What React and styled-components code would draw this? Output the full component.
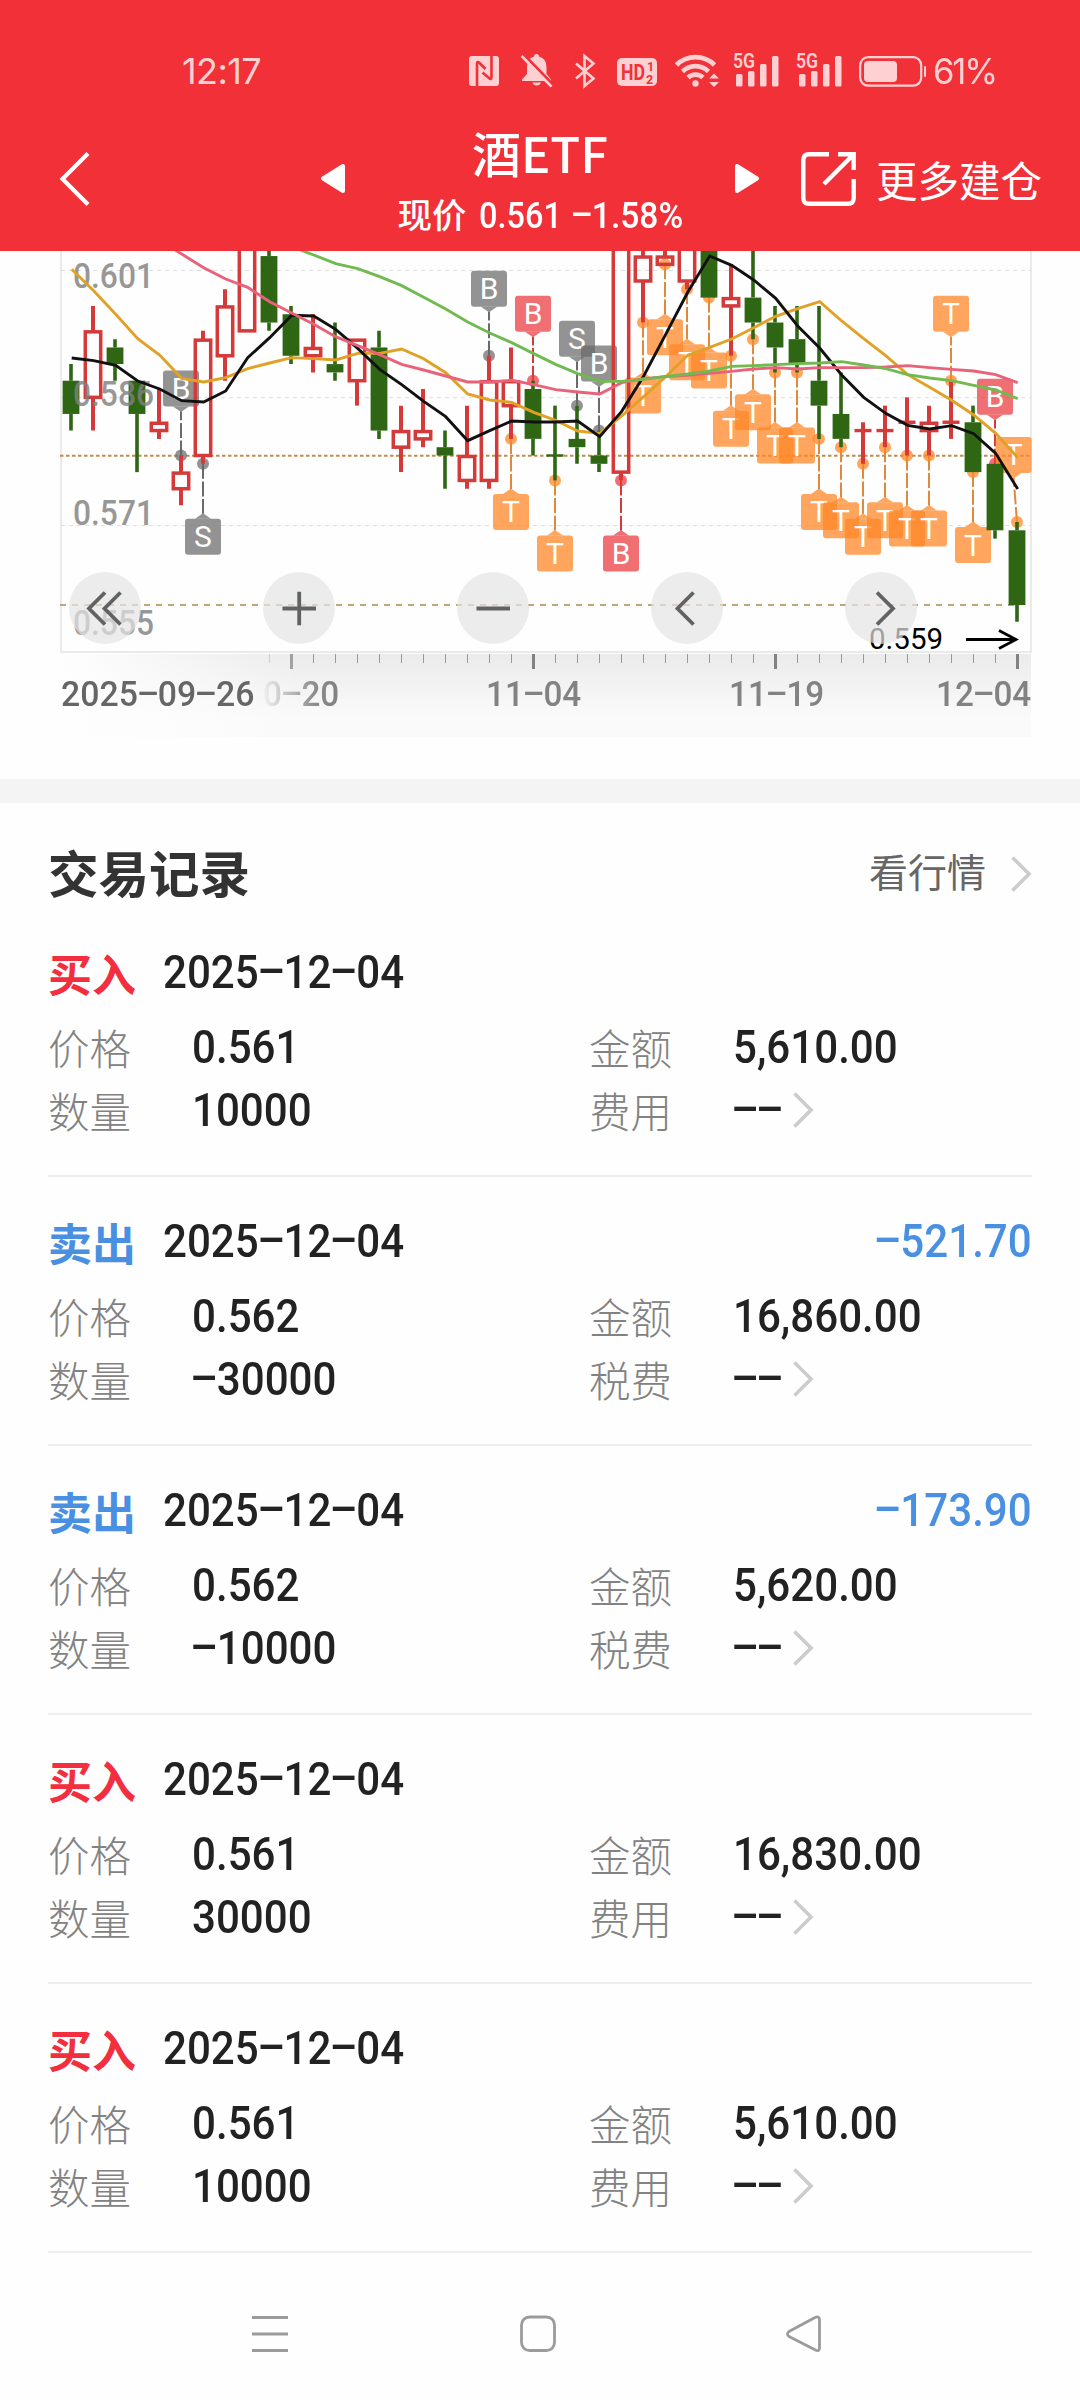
import React from 'react';
import styled, { createGlobalStyle } from 'styled-components';

const GlobalStyle = createGlobalStyle`
  * {
    box-sizing: border-box;
  }
  body {
    margin: 0;
    background: #fefefe;
    font-family: Roboto, 'Noto Sans CJK SC', sans-serif;
    color: #222;
  }
`;

const Page = styled.div`
  width: 1080px;
  height: 2400px;
  display: flex;
  flex-direction: column;
  overflow: hidden;
`;

/* ---------- numbers ---------- */

const DigitsText = styled.span`
  display: inline-block;
  font-family: Roboto, sans-serif;
  font-size: ${p => p.$size || 46}px;
  font-weight: ${p => p.$weight || 500};
  line-height: 1;
  white-space: nowrap;
  transform: scaleX(${p => p.$scale || 0.915});
  transform-origin: ${p => p.$origin || 'left'} center;
`;

// wide minus, as tall as the middle of a digit
const Dash = styled.span`
  display: inline-block;
  width: 0.59em;
  text-align: center;
  transform: translateY(-0.06em) scaleX(2);
`;

const Digits = ({ children, size, weight, scale, origin }) => (
  <DigitsText $size={size} $weight={weight} $scale={scale} $origin={origin}>
    {children.split('').map((c, i) => (c === '-' ? <Dash key={i}>-</Dash> : c))}
  </DigitsText>
);

/* ---------- header ---------- */

const Header = styled.header`
  flex: 0 0 251px;
  background: #f13037;
  color: white;
`;

const StatusBar = styled.div`
  height: 142px;
  padding-left: 182px;
  display: flex;
  align-items: center;
  color: #ffd0d2;
`;

const Clock = styled.span`
  flex: 0 0 287px;
  font-family: Inter, sans-serif;
  font-size: 36px;
  letter-spacing: -0.6px;
`;

const Percent = styled.span`
  margin-left: 6px;
  font-family: Inter, sans-serif;
  font-size: 36px;
  letter-spacing: -2.2px;
  transform: scaleX(0.96);
  transform-origin: left center;
`;

const StatusIcon = styled.svg`
  flex: none;
  height: 36px;
  margin-left: ${p => p.$gap || 0}px;
  overflow: visible;
`;

const TitleBar = styled.div`
  height: 109px;
  display: flex;
  align-items: flex-start;
`;

const BarIcon = styled.svg`
  flex: none;
  margin: ${p => p.$margin};
`;

const TitleBlock = styled.div`
  flex: 0 0 390px;
  margin-top: -21px;
  display: flex;
  flex-direction: column;
  align-items: center;
`;

const Title = styled.h1`
  margin: 0 0 0 -2px;
  font-family: 'Noto Sans CJK SC', sans-serif;
  font-size: 49px;
  font-weight: 500;
  line-height: 62px;
`;

const Subtitle = styled.div`
  display: flex;
  align-items: center;
  height: 52px;
  margin-top: 7px;
  font-size: 34.5px;
  font-weight: 500;
  line-height: 52px;
  margin-right: -8px;
`;

const Quote = styled.span`
  margin-left: 12px;
  display: flex;
`;

const More = styled.span`
  margin-top: 11px;
  margin-left: 20px;
  font-size: 41.5px;
  line-height: 60px;
  white-space: nowrap;
`;

const SignalIcon = ({ gap }) => (
  <StatusIcon $gap={gap} width="46" viewBox="0 0 46 36" fill="currentColor">
    <text x="0" y="15" fontSize="19.5" fontWeight="600" textLength="22" lengthAdjust="spacingAndGlyphs">5G</text>
    <rect x="3" y="21" width="6.5" height="12.5" rx="1.5" />
    <rect x="15" y="18" width="6.5" height="15.5" rx="1.5" />
    <rect x="27" y="11" width="6.5" height="22.5" rx="1.5" />
    <rect x="39" y="3" width="6.5" height="30.5" rx="1.5" />
  </StatusIcon>
);

const StatusIcons = () => (
  <>
    <StatusIcon width="30" viewBox="0 0 30 36">
      <rect y="3" width="30" height="30" rx="3" fill="currentColor" />
      <path d="M8 33.500V11Q8 7.500 10.500 10L16.500 16M22.500 2.500V24Q22.500 27.500 20 25L13.500 19.500" fill="none" stroke="#f13037" strokeWidth="2.600" />
    </StatusIcon>
    <StatusIcon $gap={22} width="32" viewBox="0 0 32 36">
      <path d="M13 3.500Q13 1 15.500 1T18 3.500Q25.500 5.500 25.500 14V21L30 26.500V28H1V26.500L6 21V14Q6 5.500 13 3.500ZM11.500 29.500H20Q19 32.500 15.700 32.500T11.500 29.500Z" fill="currentColor" />
      <path d="M2.500 1.200L32 31.700" stroke="#f13037" strokeWidth="3" />
      <path d="M0.700 3L30.500 33.700" stroke="currentColor" strokeWidth="2.600" />
    </StatusIcon>
    <StatusIcon $gap={22} width="22" viewBox="0 0 22 36">
      <path d="M1 10.500L18.500 25.500L9.500 33V3L18.500 10.500L1 25.500" fill="none" stroke="currentColor" strokeWidth="2.600" />
    </StatusIcon>
    <StatusIcon $gap={20} width="40" viewBox="0 0 40 36">
      <rect y="5" width="40" height="28" rx="5" fill="currentColor" />
      <g fill="#f13037" fontWeight="700">
        <text x="4" y="27" fontSize="22.500" textLength="24" lengthAdjust="spacingAndGlyphs">HD</text>
        <text x="30" y="18" fontSize="12.500">1</text>
        <text x="29" y="31" fontSize="12.500">2</text>
      </g>
    </StatusIcon>
    <StatusIcon $gap={18} width="45" viewBox="0 0 45 36">
      <g fill="none" stroke="currentColor" strokeWidth="4.800">
        <path d="M1.500 12A27 27 0 0 1 39.500 12" />
        <path d="M7.500 18.500A18.500 18.500 0 0 1 33.500 18.500" />
        <path d="M13 24.500A11 11 0 0 1 28 24.500" />
      </g>
      <circle cx="20.500" cy="30.500" r="3.200" fill="currentColor" />
      <path d="M34 25.500L39 20.500L44 25.500ZM34 29L39 34L44 29Z" fill="currentColor" />
    </StatusIcon>
    <SignalIcon gap={13} />
    <SignalIcon gap={17} />
    <StatusIcon $gap={17} width="68" viewBox="0 0 68 36">
      <rect x="1.200" y="4.200" width="61" height="28.500" rx="8" fill="none" stroke="currentColor" strokeWidth="2.200" />
      <rect x="5" y="8" width="33" height="21" rx="4" fill="currentColor" />
      <rect x="65" y="13" width="2" height="11" rx="1" fill="currentColor" />
    </StatusIcon>
  </>
);

const AppHeader = () => (
  <Header>
    <StatusBar>
      <Clock>12:17</Clock>
      <StatusIcons />
      <Percent>61%</Percent>
    </StatusBar>
    <TitleBar>
      <BarIcon $margin="10px 0 0 59px" width="32" height="54" viewBox="0 0 32 54">
        <path d="M29 1.500L3.500 27L29 52.500" fill="none" stroke="white" strokeWidth="4.200" />
      </BarIcon>
      <BarIcon $margin="21px 0 0 229px" width="26" height="31" viewBox="0 0 26 31">
        <path d="M3 15.500L23 3V28Z" fill="white" stroke="white" strokeWidth="4" strokeLinejoin="round" />
      </BarIcon>
      <TitleBlock>
        <Title>酒ETF</Title>
        <Subtitle>
          现价
          <Quote>
            <Digits size={36.5} scale={0.89}>0.561</Digits>
            <Digits size={36.5} scale={0.92}>-1.58%</Digits>
          </Quote>
        </Subtitle>
      </TitleBlock>
      <BarIcon $margin="21px 0 0 -2px" width="26" height="31" viewBox="0 0 26 31">
        <path d="M23 15.500L3 3V28Z" fill="white" stroke="white" strokeWidth="4" strokeLinejoin="round" />
      </BarIcon>
      <BarIcon $margin="10px 0 0 41px" width="55" height="54" viewBox="0 0 55 54">
        <path d="M28 2.300H8Q2.300 2.300 2.300 8V46Q2.300 51.700 8 51.700H47Q52.700 51.700 52.700 46V27M37 2.300H52.700V18M52 3L23 32" fill="none" stroke="white" strokeWidth="4.400" />
      </BarIcon>
      <More>更多建仓</More>
    </TitleBar>
  </Header>
);

/* ---------- chart ---------- */

const ChartSection = styled.section`
  position: relative;
  flex: 0 0 528px;
`;

const Plot = styled.svg`
  display: block;
`;

const STEP = 22;
const toX = i => 71 + STEP * i;
// prices are in thousandths, 559 is the lowest one on screen
const toY = price => 370.7 - (price - 559) * 8.31;
// moving averages are kept in thirds of a pixel
const toLineY = v => v / 3 - 11;

// [open side, close side, high, low, rising]
const candles = [
  [588, 584, 590, 582, 0], [594, 586, 597, 582, 1], [592, 590, 593, 588, 0], [588, 584, 588, 577, 0],
  [583, 582, 587, 581, 1], [577, 575, 579, 573, 1], [593, 579, 594, 578, 1], [597, 591, 599, 588, 1],
  [608, 594, 608, 594, 1], [603, 595, 606, 594, 0], [596, 591, 597, 590, 0], [592, 591, 596, 589, 1],
  [590, 589, 595, 588, 0], [593, 588, 593, 585, 1], [592, 582, 594, 581, 0], [582, 580, 585, 577, 1],
  [582, 581, 587, 580, 1], [580, 579, 582, 575, 0], [579, 576, 585, 575, 1], [588, 576, 591, 575, 1],
  [588, 585, 592, 581, 1], [587, 581, 588, 579, 0], [579, 579, 585, 576, 0], [581, 580, 585, 578, 0],
  [579, 578, 582, 577, 0], [610, 577, 610, 576, 1], [603, 600, 606, 595, 1], [603, 602, 606, 602, 1],
  [610, 600, 610, 599, 1], [610, 598, 610, 598, 0], [598, 597, 602, 591, 1], [598, 595, 610, 593, 0],
  [595, 592, 597, 589, 0], [593, 590, 597, 589, 0], [588, 585, 597, 581, 0], [584, 581, 589, 580, 0],
  [582, 582, 583, 578, 1], [582, 582, 585, 580, 1], [583, 583, 586, 579, 1], [583, 582, 585, 579, 1],
  [583, 583, 588, 581, 1], [583, 577, 585, 577, 0], [578, 570, 578, 569, 0], [570, 561, 571, 559, 0],
];

const averages = [
  {
    color: '#e0a126',
    from: 0,
    points: [88, 152, 223, 296, 345, 415, 426, 413, 386, 369, 353, 356, 360, 340, 340, 327, 356, 398, 462, 480, 487, 517, 541, 573, 580, 528, 470, 410, 346, 322, 297, 263, 229, 206, 185, 243, 296, 347, 404, 442, 481, 525, 580, 653],
  },
  {
    color: '#111',
    from: 0,
    points: [354, 362, 376, 423, 447, 482, 486, 453, 353, 293, 226, 228, 268, 325, 388, 434, 484, 530, 602, 572, 543, 546, 546, 543, 590, 514, 408, 283, 157, 48, 76, 120, 175, 258, 324, 405, 472, 520, 556, 567, 557, 581, 640, 747],
  },
  {
    color: '#e8637a',
    from: 4,
    points: [1, 42, 83, 117, 142, 185, 219, 253, 290, 317, 344, 373, 390, 408, 426, 426, 421, 434, 449, 456, 462, 428, 416, 410, 406, 400, 394, 387, 383, 387, 383, 383, 383, 381, 377, 383, 388, 393, 404, 428],
  },
  {
    color: '#70ba50',
    from: 10,
    points: [20, 45, 71, 86, 110, 137, 172, 207, 246, 279, 308, 341, 373, 401, 424, 424, 418, 409, 402, 393, 379, 377, 374, 371, 369, 365, 375, 386, 404, 414, 422, 436, 450, 476],
  },
];

const flagColors = {
  gray: { box: 'rgba(105, 105, 105, 0.72)', line: '#6a6a6a' },
  red: { box: 'rgba(232, 50, 55, 0.7)', line: '#d43a3a' },
  orange: { box: 'rgba(255, 135, 39, 0.75)', line: '#e0883c' },
};

// [candle, letter, colour, price, flag stands above the dot]
const flags = [
  [5, 'B', 'gray', 579, 1], [6, 'S', 'gray', 578, 0], [19, 'B', 'gray', 591, 1], [20, 'T', 'orange', 581, 0],
  [21, 'B', 'red', 588, 1], [22, 'T', 'orange', 576, 0], [23, 'S', 'gray', 585, 1], [24, 'B', 'gray', 582, 1],
  [25, 'B', 'red', 576, 0], [26, 'T', 'orange', 595, 0], [27, 'T', 'orange', 602, 0], [28, 'T', 'orange', 599, 0],
  [29, 'T', 'orange', 598, 0], [30, 'T', 'orange', 591, 0], [31, 'T', 'orange', 593, 0], [32, 'T', 'orange', 589, 0],
  [33, 'T', 'orange', 589, 0], [34, 'T', 'orange', 581, 0], [35, 'T', 'orange', 580, 0], [36, 'T', 'orange', 578, 0],
  [37, 'T', 'orange', 580, 0], [38, 'T', 'orange', 579, 0], [39, 'T', 'orange', 579, 0], [40, 'T', 'orange', 588, 1],
  [41, 'T', 'orange', 577, 0], [42, 'B', 'red', 578, 1], [43, 'T', 'orange', 571, 1],
];

const Candle = ({ index, data: [top, bottom, high, low, rising] }) => {
  const x = toX(index);
  const y1 = toY(top);
  const y2 = toY(bottom);
  const color = rising ? '#d43a3a' : '#2f6614';
  const wick = rising ? 4 : 3.6;
  if (top === bottom) {
    return (
      <g stroke={color}>
        <path d={`M${x} ${toY(high)}V${toY(low)}`} strokeWidth={wick} />
        <path d={`M${x - 8.5} ${y1}h17`} strokeWidth={rising ? 3.4 : 2.4} />
      </g>
    );
  }
  return (
    <g stroke={color}>
      <path d={`M${x} ${toY(high)}V${y1}M${x} ${y2}V${toY(low)}`} strokeWidth={wick} />
      {rising
        ? <rect x={x - 7.7} y={y1 + 1} width="15.4" height={y2 - y1 - 1} fill="none" strokeWidth="3.5" />
        : <rect x={x - 8.4} y={y1} width="16.8" height={y2 - y1} fill={color} stroke="none" />}
    </g>
  );
};

const Flag = ({ data: [index, letter, color, price, above] }) => {
  const x = toX(index);
  const y = toY(price);
  const { box, line } = flagColors[color];
  // the last flag is pushed back inside the frame
  const fx = Math.min(x, 1013.6);
  const top = above ? y - 85 : y + 55;
  const tip = above
    ? `M${fx - 8} ${top + 36}L${fx} ${top + 41.5}L${fx + 8} ${top + 36}Z`
    : `M${fx - 8} ${top}L${fx} ${top - 5.5}L${fx + 8} ${top}Z`;
  return (
    <g>
      <path d={`M${x} ${y}L${fx} ${above ? top + 41 : top - 5}`} stroke={line} strokeWidth="2" strokeDasharray="15 2.6" />
      <circle cx={x} cy={y} r="6" fill={box} />
      <path d={tip} fill={box} />
      <rect x={fx - 18} y={top} width="36" height="36" rx="3" fill={box} />
      <text x={fx} y={top + 28.5} textAnchor="middle" fontSize="30" fill="white">{letter}</text>
    </g>
  );
};

const PriceLabel = styled.text`
  font-size: 35px;
  font-weight: 500;
  fill: #808080;
  fill-opacity: 0.82;
`;

const gridLines = [19.5, 146.7, 274.5];
const priceLabels = [['0.601', 37], ['0.586', 155], ['0.571', 274], ['0.555', 384]];

const CandleChart = () => (
  <Plot width="1080" height="403" viewBox="0 0 1080 403">
    <path d="M61 0V401H1031V0" fill="none" stroke="#eaeaea" strokeWidth="2" />
    {gridLines.map(y => (
      <path key={y} d={`M61 ${y}H1031`} stroke="#dedede" strokeWidth="1" strokeDasharray="4 4" />
    ))}
    <path d="M60 204.700H1031" stroke="#c08c4e" strokeWidth="2" strokeDasharray="3.500 2.500" />
    <path d="M60 354H1017" stroke="#bfa674" strokeWidth="2" strokeDasharray="6 6" />
    {flags.map(f => <Flag key={f[0]} data={f} />)}
    {candles.map((c, i) => <Candle key={i} index={i} data={c} />)}
    {priceLabels.map(([label, y]) => (
      <PriceLabel key={label} x="73" y={y} textLength="81" lengthAdjust="spacingAndGlyphs">{label}</PriceLabel>
    ))}
    {averages.map(({ color, from, points }) => (
      <polyline
        key={color}
        points={points.map((v, i) => `${toX(from + i) + 0.7},${toLineY(v)}`).join(' ')}
        fill="none"
        stroke={color}
        strokeWidth="2.9"
      />
    ))}
    <text x="869" y="398" fontSize="29.5" fill="#000">0.559</text>
    <path d="M966 388.500H1016M999 379.500L1016 388.500L999 397.500" fill="none" stroke="#000" strokeWidth="2.800" />
  </Plot>
);

const Axis = styled.div`
  width: 970px;
  height: 83px;
  margin-left: 61px;
  background:
    linear-gradient(to right, #fefefe 0, rgba(254, 254, 254, 0) 240px),
    linear-gradient(#ebebeb, #fafafa 62px);
`;

const AxisLabels = styled.div`
  display: grid;
  grid-template-columns: 183px 242px 243px 160px 1fr;
  margin-top: 6px;
  color: #828282;
`;

const AxisLabel = styled.span`
  display: flex;
  justify-content: ${p => (p.$end ? 'flex-end' : 'flex-start')};
  white-space: nowrap;
  ${p => p.$start && 'color: #666;'}
  ${p => p.$faded && 'mask-image: linear-gradient(to right, transparent 16px, rgba(0, 0, 0, 0.9) 70px, black 90px);'}
`;

const DateAxis = () => (
  <Axis>
    <Plot width="972" height="17" viewBox="61 0 972 17">
      {candles.map((_, i) => {
        if (i < 9) return null;
        const major = [10, 21, 32, 43].includes(i);
        return (
          <path
            key={i}
            d={`M${toX(i) + 0.5} 0V${major ? 15 : 9}`}
            stroke={major ? '#828282' : '#999'}
            strokeWidth={major ? 3 : 1}
            opacity={i === 9 ? 0.35 : i === 10 ? 0.7 : 1}
          />
        );
      })}
    </Plot>
    <AxisLabels>
      <AxisLabel $start><Digits size={35} scale={0.965}>2025-09-26</Digits></AxisLabel>
      <AxisLabel $faded><Digits size={35} scale={0.95}>10-20</Digits></AxisLabel>
      <AxisLabel><Digits size={35} scale={0.95}>11-04</Digits></AxisLabel>
      <AxisLabel><Digits size={35} scale={0.95}>11-19</Digits></AxisLabel>
      <AxisLabel $end><Digits size={35} scale={0.95} origin="right">12-04</Digits></AxisLabel>
    </AxisLabels>
  </Axis>
);

// floats over the bottom of the plot
const Controls = styled.div`
  position: absolute;
  left: 69px;
  top: 321px;
  display: flex;
  gap: 122px;
`;

const RoundButton = styled.button`
  width: 72px;
  height: 72px;
  padding: 0;
  border: 0;
  border-radius: 50%;
  display: flex;
  align-items: center;
  justify-content: center;
  background: rgba(228, 228, 228, 0.7);
`;

const controls = [
  'M32.500 1.500L16.500 17.500L32.500 33.500M17 1.500L1 17.500L17 33.500',
  'M0.500 17.500H34M17.200 0.800V34.200',
  'M0.500 17.500H34',
  'M23.500 1.500L7.500 17.500L23.500 33.500',
  'M13 1.500L29 17.500L13 33.500',
];

const ChartControls = () => (
  <Controls>
    {controls.map(d => (
      <RoundButton key={d}>
        <svg width="35" height="35" viewBox="0 0 35 35" overflow="visible">
          <path d={d} fill="none" stroke="#626262" strokeWidth="3.800" />
        </svg>
      </RoundButton>
    ))}
  </Controls>
);

/* ---------- trade records ---------- */

const Divider = styled.div`
  flex: 0 0 24px;
  background: #f4f4f4;
`;

const Records = styled.section`
  flex: 1;
  padding: 0 48px;
`;

const RecordsHead = styled.div`
  height: 105px;
  padding-top: 41px;
  display: flex;
  align-items: center;
  justify-content: space-between;
`;

const RecordsTitle = styled.h2`
  margin: 0;
  font-size: 50.5px;
  font-weight: 700;
  line-height: 64px;
  color: #333;
`;

const QuotesLink = styled.a`
  display: flex;
  align-items: center;
  gap: 25px;
  margin-top: -5px;
  font-size: 39px;
  line-height: 60px;
  color: #666;
`;

const Record = styled.article`
  height: 269px;
  padding-top: 38px;
  border-bottom: 2px solid #eee;
`;

const RecordHead = styled.div`
  height: 52px;
  display: flex;
  align-items: center;
`;

const Side = styled.span`
  width: 115px;
  padding-top: 10px;
  font-size: 44px;
  font-weight: 700;
  line-height: 52px;
  color: ${p => (p.$buy ? '#f22e3f' : '#4a90e2')};
`;

const Profit = styled.span`
  display: flex;
  margin-left: auto;
  color: #4a90e2;
`;

const Fields = styled.div`
  margin-top: 17px;
  display: grid;
  grid-template-columns: 144px 397px 144px 1fr;
  grid-auto-rows: 63px;
  align-items: center;
`;

const Label = styled.span`
  padding-top: 8px;
  font-size: 41.5px;
  font-weight: 300;
  line-height: 54px;
  color: #828282;
`;

const Value = styled.span`
  display: flex;
  align-items: center;
  gap: 6px;
`;

const Chevron = () => (
  <svg width="21" height="36" viewBox="0 0 21 36">
    <path d="M1.500 1.500L18 18L1.500 34.500" fill="none" stroke="#ccc" strokeWidth="3.600" />
  </svg>
);

const trades = [
  { buy: true, price: '0.561', amount: '5,610.00', count: '10000' },
  { buy: false, price: '0.562', amount: '16,860.00', count: '-30000', profit: '-521.70' },
  { buy: false, price: '0.562', amount: '5,620.00', count: '-10000', profit: '-173.90' },
  { buy: true, price: '0.561', amount: '16,830.00', count: '30000' },
  { buy: true, price: '0.561', amount: '5,610.00', count: '10000' },
];

const Trade = ({ buy, price, amount, count, profit }) => (
  <Record>
    <RecordHead>
      <Side $buy={buy}>{buy ? '买入' : '卖出'}</Side>
      <Digits>2025-12-04</Digits>
      {profit && <Profit><Digits origin="right">{profit}</Digits></Profit>}
    </RecordHead>
    <Fields>
      <Label>价格</Label>
      <Value><Digits>{price}</Digits></Value>
      <Label>金额</Label>
      <Value><Digits>{amount}</Digits></Value>
      <Label>数量</Label>
      <Value><Digits>{count}</Digits></Value>
      <Label>{buy ? '费用' : '税费'}</Label>
      <Value>
        <Digits>--</Digits>
        <Chevron />
      </Value>
    </Fields>
  </Record>
);

/* ---------- system navigation ---------- */

const SystemNav = styled.nav`
  flex: 0 0 148px;
  padding: 62px 258px 0 251px;
  display: flex;
  justify-content: space-between;
`;

const NavIcon = styled.svg`
  fill: none;
  stroke: #9b9b9b;
  stroke-width: 2.8;
  stroke-linejoin: round;
`;

const App = () => (
  <Page>
    <GlobalStyle />
    <AppHeader />
    <ChartSection>
      <CandleChart />
      <DateAxis />
      <ChartControls />
    </ChartSection>
    <Divider />
    <Records>
      <RecordsHead>
        <RecordsTitle>交易记录</RecordsTitle>
        <QuotesLink>
          看行情
          <Chevron />
        </QuotesLink>
      </RecordsHead>
      {trades.map((t, i) => <Trade key={i} {...t} />)}
    </Records>
    <SystemNav>
      <NavIcon width="38" height="38" viewBox="0 0 38 38">
        <path d="M1 2.500H37M1 19H37M1 35.500H37" />
      </NavIcon>
      <NavIcon width="36" height="38" viewBox="0 0 36 38">
        <rect x="1.500" y="2" width="33" height="33.500" rx="8" />
      </NavIcon>
      <NavIcon width="36" height="38" viewBox="0 0 36 38">
        <path d="M3 16.500L29 2.500Q33.500 0.500 33.500 5V33Q33.500 37 29.500 35L3 21.500Q0 19 3 16.500Z" />
      </NavIcon>
    </SystemNav>
  </Page>
);

export default App;
